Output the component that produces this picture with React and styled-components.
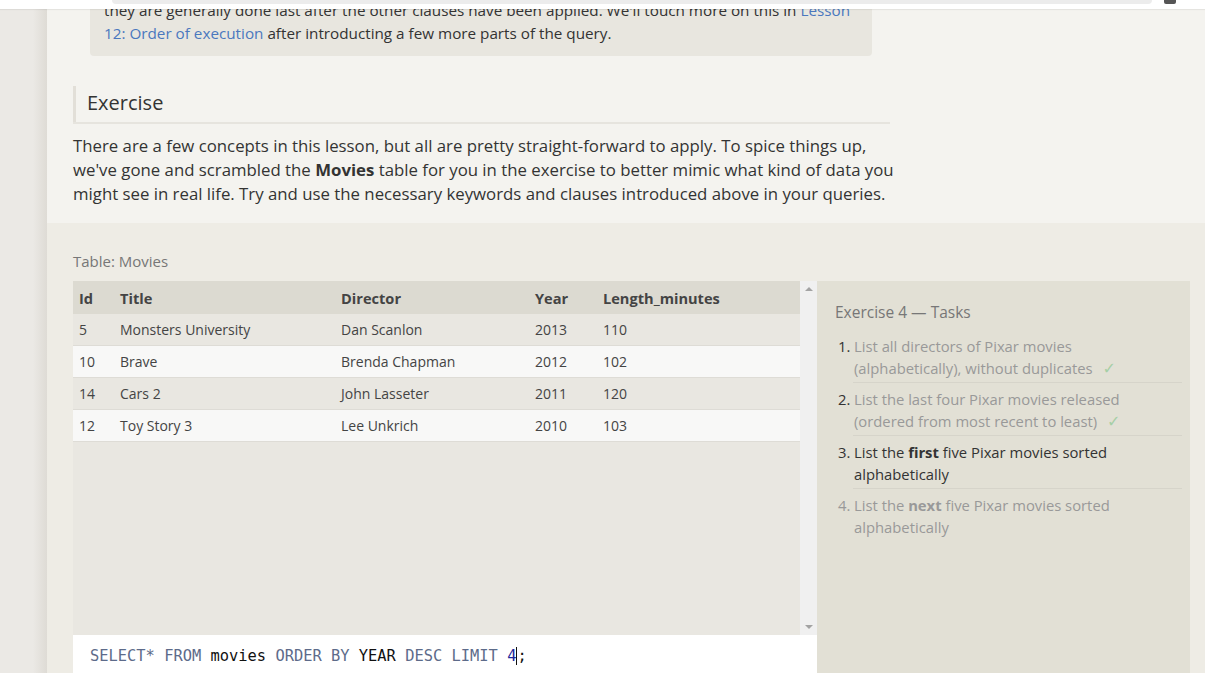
import React from "react";
import styled, { createGlobalStyle } from "styled-components";

const GlobalStyle = createGlobalStyle`
  html, body {
    margin: 0;
    padding: 0;
    height: 100%;
    overflow: hidden;
    background: #eeece5;
  }
  body {
    font-family: "Open Sans", "DejaVu Sans", sans-serif;
    color: #333;
  }
`;

const Page = styled.div`
  display: flex;
  height: 673px;
  overflow: hidden;
  position: relative;
`;

const Sidebar = styled.div`
  width: 47px;
  flex-shrink: 0;
  background: linear-gradient(to right, #ebe9e5 0%, #ebe9e5 70%, #dedbd5 100%);
`;

const Main = styled.div`
  flex: 1;
  display: flex;
  flex-direction: column;
  margin-top: -1px;
`;

const Lesson = styled.div`
  background: #f4f3ef;
  padding: 0 26px 17px 26px;
`;

const Callout = styled.div`
  margin-left: 17px;
  width: 782px;
  box-sizing: border-box;
  background: #e8e6df;
  border-radius: 0 0 4px 4px;
  padding: 0 14px 11px 14px;
  font-size: 15.25px;
  line-height: 23px;
  color: #333;
`;

const Link = styled.a`
  color: #4b78be;
  text-decoration: none;
`;

const Heading = styled.h2`
  margin: 30px 0 0 0;
  width: 817px;
  box-sizing: border-box;
  height: 36px;
  display: flex;
  align-items: center;
  padding: 0 0 4px 11px;
  border-left: 3px solid #e2dfd8;
  box-shadow: 0 2px 0 #e6e4de;
  font-size: 20px;
  font-weight: 400;
  color: #333;
`;

const Paragraph = styled.p`
  margin: 12px 0 0 0;
  width: 830px;
  font-size: 16.8px;
  line-height: 24px;
  color: #333;
`;

const Workspace = styled.div`
  flex: 1;
  display: flex;
  flex-direction: column;
  padding: 27px 15px 0 26px;
`;

const TableLabel = styled.div`
  font-size: 15px;
  color: #777;
  height: 22px;
  line-height: 22px;
  margin-bottom: 9px;
`;

const Split = styled.div`
  flex: 1;
  display: flex;
`;

const LeftColumn = styled.div`
  width: 744px;
  display: flex;
  flex-direction: column;
`;

const TableArea = styled.div`
  height: 354px;
  display: flex;
  background: #e9e7e1;
`;

const TableScroll = styled.div`
  flex: 1;
`;

const Table = styled.table`
  width: 100%;
  table-layout: fixed;
  border-collapse: collapse;
  font-size: 14px;
`;

const HeadCell = styled.th`
  text-align: left;
  font-weight: 700;
  font-size: 14.6px;
  height: 33px;
  padding: 0 6px;
  background: #dcdad1;
  color: #444;
  width: ${(p) => p.w - 12}px;
`;

const Row = styled.tr`
  background: ${(p) => (p.odd ? "#e9e7e1" : "#f8f8f7")};
  border-bottom: 1px solid #dedcd6;
`;

const Cell = styled.td`
  height: 31px;
  padding: 0 6px;
  color: #444;
`;

const Scrollbar = styled.div`
  width: 17px;
  background: #f0f0f0;
  display: flex;
  flex-direction: column;
  justify-content: space-between;
  align-items: center;
  padding: 6px 0;
  box-sizing: border-box;
`;

const Arrow = styled.div`
  width: 0;
  height: 0;
  border-left: 4px solid transparent;
  border-right: 4px solid transparent;
  ${(p) =>
    p.up
      ? "border-bottom: 4px solid #a3a3a3;"
      : "border-top: 4px solid #a3a3a3;"}
`;

const Editor = styled.div`
  flex: 1;
  background: #fff;
  padding: 11px 17px;
  font-family: "DejaVu Sans Mono", "Liberation Mono", monospace;
  font-size: 15.4px;
  line-height: 20px;
  color: #111;
  white-space: pre;
`;

const Kw = styled.span`
  color: #5d6b8a;
`;

const Num = styled.span`
  color: #1d2a9c;
`;

const Caret = styled.span`
  display: inline-block;
  width: 1px;
  height: 18px;
  background: #111;
  vertical-align: -4px;
`;

const TasksPanel = styled.div`
  width: 373px;
  background: #e2e0d5;
  padding: 20px 8px 0 18px;
  box-sizing: border-box;
`;

const TasksTitle = styled.div`
  font-size: 15.5px;
  color: #777;
  line-height: 22px;
  margin-bottom: 12px;
`;

const TaskList = styled.ol`
  margin: 0;
  padding: 0;
  list-style: none;
`;

const Task = styled.li`
  display: flex;
  font-size: 14.8px;
  line-height: 22px;
  padding: 0 0 4px 0;
  margin-bottom: 5px;
  position: relative;
  &::after {
    content: "";
    position: absolute;
    left: 18px;
    right: 0;
    bottom: 0;
    border-bottom: ${(p) => (p.last ? "none" : "1px solid #d6d4ca")};
  }
`;

const TaskNum = styled.span`
  width: 19px;
  flex-shrink: 0;
  box-sizing: border-box;
  padding-left: 3px;
  color: ${(p) => (p.dim ? "#999" : "#333")};
`;

const TaskText = styled.span`
  color: ${(p) => (p.dim ? "#999" : "#333")};
  width: 290px;
`;

const Check = styled.span`
  color: #a6cfa6;
  font-size: 16px;
  margin-left: 10px;
`;

const Hint = styled.div`
  margin-top: 142px;
  font-size: 14px;
  color: #777;
`;

const TopOverlay = styled.div`
  position: absolute;
  top: 0;
  left: 0;
  right: 0;
  height: 9px;
  background: #fff;
  box-shadow: 0 1px 1px rgba(0, 0, 0, 0.06);
`;

const FindBar = styled.div`
  position: absolute;
  left: 112px;
  width: 1040px;
  top: 0;
  height: 4px;
  background: #ececec;
  border-radius: 0 0 6px 6px;
`;

const Badge = styled.div`
  position: absolute;
  left: 1164px;
  top: 0;
  width: 12px;
  height: 4px;
  background: #555;
  border-radius: 0 0 2px 2px;
`;

const columns = [
  { key: "id", label: "Id", w: 41 },
  { key: "title", label: "Title", w: 221 },
  { key: "director", label: "Director", w: 194 },
  { key: "year", label: "Year", w: 68 },
  { key: "length", label: "Length_minutes", w: 203 },
];

const movies = [
  { id: 5, title: "Monsters University", director: "Dan Scanlon", year: 2013, length: 110 },
  { id: 10, title: "Brave", director: "Brenda Chapman", year: 2012, length: 102 },
  { id: 14, title: "Cars 2", director: "John Lasseter", year: 2011, length: 120 },
  { id: 12, title: "Toy Story 3", director: "Lee Unkrich", year: 2010, length: 103 },
];

export default function App() {
  return (
    <>
      <GlobalStyle />
      <Page>
        <Sidebar />
        <Main>
          <Lesson>
            <Callout>
              they are generally done last after the other clauses have been applied. We'll touch more on this in{" "}
              <Link>Lesson 12: Order of execution</Link> after introducting a few more parts of the query.
            </Callout>
            <Heading>Exercise</Heading>
            <Paragraph>
              There are a few concepts in this lesson, but all are pretty straight-forward to apply. To spice things
              up, we've gone and scrambled the <b>Movies</b> table for you in the exercise to better mimic what kind of
              data you might see in real life. Try and use the necessary keywords and clauses introduced above in your
              queries.
            </Paragraph>
          </Lesson>
          <Workspace>
            <TableLabel>Table: Movies</TableLabel>
            <Split>
              <LeftColumn>
                <TableArea>
                  <TableScroll>
                    <Table>
                      <thead>
                        <tr>
                          {columns.map((c) => (
                            <HeadCell key={c.key} w={c.w}>
                              {c.label}
                            </HeadCell>
                          ))}
                        </tr>
                      </thead>
                      <tbody>
                        {movies.map((m, i) => (
                          <Row key={m.id} odd={i % 2 === 0}>
                            {columns.map((c) => (
                              <Cell key={c.key}>{m[c.key]}</Cell>
                            ))}
                          </Row>
                        ))}
                      </tbody>
                    </Table>
                  </TableScroll>
                  <Scrollbar>
                    <Arrow up />
                    <Arrow />
                  </Scrollbar>
                </TableArea>
                <Editor>
                  <Kw>SELECT*</Kw> <Kw>FROM</Kw> movies <Kw>ORDER</Kw> <Kw>BY</Kw> YEAR <Kw>DESC</Kw> <Kw>LIMIT</Kw>{" "}
                  <Num>4</Num>
                  <Caret />;
                </Editor>
              </LeftColumn>
              <TasksPanel>
                <TasksTitle>Exercise 4 — Tasks</TasksTitle>
                <TaskList>
                  <Task>
                    <TaskNum>1.</TaskNum>
                    <TaskText dim>
                      List all directors of Pixar movies (alphabetically), without duplicates<Check>✓</Check>
                    </TaskText>
                  </Task>
                  <Task>
                    <TaskNum>2.</TaskNum>
                    <TaskText dim>
                      List the last four Pixar movies released (ordered from most recent to least)<Check>✓</Check>
                    </TaskText>
                  </Task>
                  <Task>
                    <TaskNum>3.</TaskNum>
                    <TaskText>
                      List the <b>first</b> five Pixar movies sorted alphabetically
                    </TaskText>
                  </Task>
                  <Task last>
                    <TaskNum dim>4.</TaskNum>
                    <TaskText dim>
                      List the <b>next</b> five Pixar movies sorted alphabetically
                    </TaskText>
                  </Task>
                </TaskList>
                <Hint>
                  Stuck? Read this task's <Link>Solution</Link>.
                </Hint>
              </TasksPanel>
            </Split>
          </Workspace>
        </Main>
        <TopOverlay>
          <FindBar />
          <Badge />
        </TopOverlay>
      </Page>
    </>
  );
}
